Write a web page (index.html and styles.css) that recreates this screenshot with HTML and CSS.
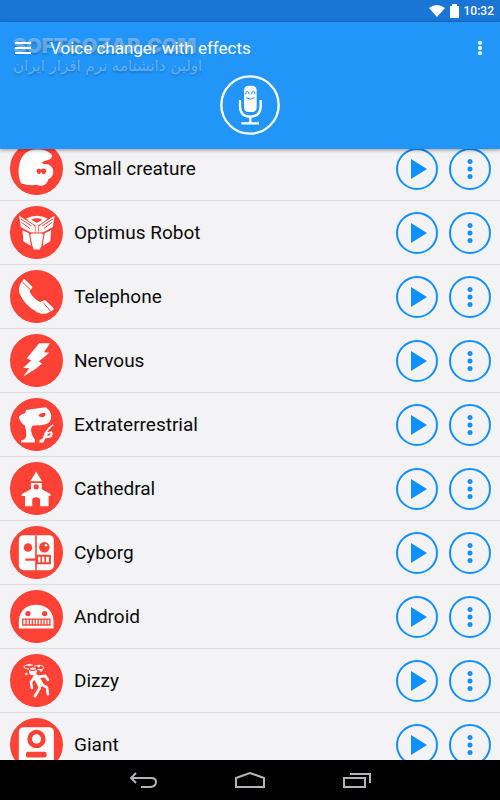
FILE: index.html
```html
<!DOCTYPE html>
<html lang="en">
  <head>
    <meta charset="UTF-8" />
    <meta name="viewport" content="width=device-width, initial-scale=1" />
    <title>Voice changer with effects</title>
    <link rel="stylesheet" href="styles.css">
  </head>
  <body>
    <div class="status-bar">
      <svg width="16" height="14" viewBox="0 0 16 14"><path d="M0 4Q8-2 16 4L8 13z" /></svg>
      <svg width="9" height="14" viewBox="0 0 9 14"><path d="M0 2h2V0h5v2h2v12H0z" /></svg>
      <span>10:32</span>
    </div>

    <header class="header">
      <div class="watermark">
        <strong>SOFTGOZAR.COM</strong>
        <span lang="fa" dir="rtl">اولین دانشنامه نرم افزار ایران</span>
      </div>
      <div class="toolbar">
        <button class="icon-button" aria-label="Menu">
          <svg width="16" height="12" viewBox="0 0 16 12"><path d="M0 0h16v2H0zM0 5h16v2H0zM0 10h16v2H0z" /></svg>
        </button>
        <h1>Voice changer with effects</h1>
        <button class="icon-button" aria-label="More options">
          <svg width="4" height="14" viewBox="0 0 4 14"><circle cx="2" cy="2" r="2" /><circle cx="2" cy="7" r="2" /><circle cx="2" cy="12" r="2" /></svg>
        </button>
      </div>
      <button class="record" aria-label="Record">
        <svg viewBox="60 225 180 180">
          <circle cx="150" cy="315" r="86" fill="none" stroke="#fff" stroke-width="7" />
          <rect x="132" y="257" width="38" height="79" rx="13" fill="#fff" />
          <path d="M137 283q0-9 5-9t5 9M155 283q0-9 5-9t5 9M138 293q13 9 26 0" fill="none" stroke="#2196f8" stroke-width="3" />
          <path d="M120 300v18q0 32 31 32t31-32v-18M151 350v20M124 370h53" fill="none" stroke="#fff" stroke-width="7" />
        </svg>
      </button>
    </header>

    <main class="effects">
      <ul class="effect-list">
        <li class="effect">
          <svg class="effect-icon" viewBox="29 -11 162 162">
            <path d="M64 116C55 106 53 70 58 56C63 32 80 12 108 12C132 10 152 18 158 31Q158 43 136 46Q128 48 126 53Q130 57 138 56Q156 58 161 74Q163 96 146 103Q143 118 130 122Q118 124 112 120Q88 124 64 116z" />
            <path class="cut" d="M110 78Q112 65 124 73Q136 65 140 76Q138 90 129 87L125 80L120 87Q112 88 110 78z" />
          </svg>
          <span class="effect-name">Small creature</span>
        </li>
        <li class="effect">
          <svg class="effect-icon" viewBox="29 181 162 162">
            <path d="M78 219Q111 202 144 219L134 228L113 241H109L88 228z" />
            <path d="M57 211L97 237L105 244V262L91 261L62 245z" />
            <path d="M165 211L125 237L117 244V262L131 261L160 245z" />
            <path d="M107 236H115V262H107z" />
            <path d="M67 255L87 264L93 303L70 289zM155 255L135 264L129 303L152 289z" />
            <path d="M94 265H128L131 270L125 302L120 314H102L97 302L91 270z" />
            <path class="line" d="M62 221L95 242M64 231L90 250M160 221L127 242M158 231L132 250" />
            <path class="cut" d="M94 223Q111 214 128 223L111 233z" />
          </svg>
          <span class="effect-name">Optimus Robot</span>
        </li>
        <li class="effect">
          <svg class="effect-icon" viewBox="29 13 162 162">
            <path d="M74 41L96 63Q99 67 95 70L89 76Q91 94 120 111L132 106Q137 105 141 109L162 129Q164 133 159 136L143 145Q129 150 112 142Q73 121 58 84Q54 68 62 53L70 42Q72 39 74 41z" />
            <path class="line" d="M65 48L91 73M130 112L153 139" />
          </svg>
          <span class="effect-name">Telephone</span>
        </li>
        <li class="effect">
          <svg class="effect-icon" viewBox="29 206 162 162">
            <path d="M118 234H151L133 262L149 263L117 290L127 296L107 313L69 337L88 311L69 310L94 286L80 281z" />
          </svg>
          <span class="effect-name">Nervous</span>
        </li>
        <li class="effect">
          <svg class="effect-icon" viewBox="29 14 162 162">
            <path d="M56 73Q58 66 76 60L78 51L137 42Q142 42 144 48Q152 52 155 68Q156 80 149 88Q138 98 122 97L99 98Q92 104 94 117Q96 130 105 141V150H63V144Q76 141 79 130Q80 112 74 98Q60 90 56 73z" />
            <path d="M119 150V144L130 136L134 122L146 105L160 94L162 97L147 112L143 119L157 116L160 123L157 133L147 136L137 137L131 150z" />
            <path class="cut" d="M116 69Q119 59 136 59Q140 66 133 71Q124 74 116 69zM145 123L153 122V127L143 130z" />
          </svg>
          <span class="effect-name">Extraterrestrial</span>
        </li>
        <li class="effect">
          <svg class="effect-icon" viewBox="29 207 162 162">
            <path d="M109 236L127 266H91z" />
            <path fill-rule="evenodd" d="M93 271H126V290L153 305V311H147V342H121V325Q121 315 109 315T97 325V342H75V311H65V305L93 290zM109 275A8 8 0 1 0 109 291A8 8 0 1 0 109 275z" />
          </svg>
          <span class="effect-name">Cathedral</span>
        </li>
        <li class="effect">
          <svg class="effect-icon" viewBox="29 18 162 162">
            <rect x="56" y="46" width="107" height="107" rx="14" />
            <circle class="cut" cx="84" cy="84" r="13" />
            <circle class="cut" cx="134" cy="83" r="16" />
            <circle cx="139" cy="77" r="4" />
            <path class="cut" d="M106 46H111V153H106zM76 117H108V124H76zM109 106H154V135H109z" />
            <path d="M115 112H122V129H115zM127 112H134V129H127zM139 112H148V129H139z" />
          </svg>
          <span class="effect-name">Cyborg</span>
        </li>
        <li class="effect">
          <svg class="effect-icon" viewBox="29 211 162 162">
            <path d="M56 329V303C60 270 82 256 109 256S158 270 162 303V329z" />
            <circle class="cut" cx="84" cy="283" r="8" />
            <circle class="cut" cx="135" cy="283" r="8" />
            <path class="cut" d="M66 298H153V320H66z" />
            <path d="M70 302h6v14h-6zM80 302h6v14h-6zM90 302h5v14h-5zM99 302h5v14h-5zM108 302h5v14h-5zM117 302h5v14h-5zM126 302h5v14h-5zM135 302h5v14h-5zM144 302h5v14h-5z" />
          </svg>
          <span class="effect-name">Android</span>
        </li>
        <li class="effect">
          <svg class="effect-icon" viewBox="29 20 162 162">
            <circle cx="99" cy="73" r="12" />
            <path class="limb" d="M109 91L122 112" stroke-width="18" />
            <path class="limb" d="M104 90L93 106L96 124M116 90L137 87L145 99M116 112L120 124L105 149M124 112L142 122L145 143" stroke-width="8" />
            <path class="cut" d="M86 65Q100 71 112 65V68Q100 75 86 69z" />
            <path class="limb" d="M86 66Q68 64 73 57Q82 50 98 54M104 57Q126 51 132 60Q135 69 114 68" stroke-width="3" />
            <circle cx="88" cy="54" r="4" /><circle cx="117" cy="57" r="4" /><circle cx="124" cy="70" r="4" /><circle cx="79" cy="81" r="4" />
          </svg>
          <span class="effect-name">Dizzy</span>
        </li>
        <li class="effect">
          <svg class="effect-icon" viewBox="29 212 162 162">
            <rect x="56" y="240" width="107" height="110" rx="14" />
            <circle class="cut" cx="110" cy="276" r="28" />
            <circle cx="110" cy="276" r="14" />
            <rect class="cut" x="78" y="315" width="63" height="18" rx="6" />
          </svg>
          <span class="effect-name">Giant</span>
        </li>
      </ul>
    </main>

    <nav class="nav-bar">
      <button aria-label="Back">
        <svg width="28" height="16" viewBox="0 0 28 16"><path d="M7 1L2 6L7 11M2 6H22Q27 6 27 10T22 15H12" /></svg>
      </button>
      <button aria-label="Home">
        <svg width="30" height="16" viewBox="0 0 30 16"><path d="M1 15V6L15 1L29 6V15z" /></svg>
      </button>
      <button aria-label="Recent apps">
        <svg width="28" height="16" viewBox="0 0 28 16"><path d="M1 6H22V15H1zM7 2H27V11" /></svg>
      </button>
    </nav>

    <template id="actions">
      <button class="round-button play">
        <svg viewBox="0 0 42 42"><path d="M15 11L31 21L15 31z" /></svg>
      </button>
      <button class="round-button more">
        <svg viewBox="0 0 84 84"><circle cx="42" cy="27" r="5" /><circle cx="42" cy="42" r="5" /><circle cx="42" cy="57" r="5" /></svg>
      </button>
    </template>

    <script>
      // Every effect gets the same pair of buttons
      const actions = document.getElementById("actions");

      document.querySelectorAll(".effect").forEach((effect) => {
        const name = effect.querySelector(".effect-name").textContent;
        const buttons = actions.content.cloneNode(true);
        buttons.querySelector(".play").setAttribute("aria-label", "Play " + name);
        buttons.querySelector(".more").setAttribute("aria-label", "Options for " + name);
        effect.appendChild(buttons);
      });
    </script>
  </body>
</html>
```
FILE: styles.css
```css
:root {
  --blue: #2196f8;
  --dark-blue: #1976d6;
  --button-blue: #0f90ff;
  --red: #ff4136;
  --background: #f3f2f4;
  --divider: #dedde0;
}

* {
  box-sizing: border-box;
}

body {
  display: flex;
  flex-direction: column;
  height: 100vh;
  margin: 0;
  font-family: Roboto, sans-serif;
  background-color: var(--background);
  color: #0a0a0a;
}

button {
  display: flex;
  align-items: center;
  justify-content: center;
  margin: 0;
  padding: 0;
  border: none;
  background: none;
  cursor: pointer;
}

/* Status bar */
.status-bar {
  display: flex;
  flex: none;
  align-items: center;
  justify-content: flex-end;
  gap: 5px;
  height: 22px;
  padding-right: 6px;
  background-color: var(--dark-blue);
  color: #fff;
  font-size: 12px;
  font-weight: 500;
}

.status-bar svg,
.icon-button svg {
  fill: #fff;
}

/* Header */
.header {
  position: relative;
  z-index: 1;
  display: flex;
  flex: none;
  flex-direction: column;
  align-items: center;
  padding-bottom: 13px;
  background-color: var(--blue);
  box-shadow: 0 1px 4px rgba(0, 0, 0, 0.4);
}

.toolbar {
  position: relative;
  display: flex;
  align-items: center;
  width: 100%;
  height: 52px;
  padding: 0 10px;
}

.toolbar h1 {
  flex: 1;
  margin: 0 0 0 14px;
  color: #fff;
  font-size: 17px;
  font-weight: 400;
}

.icon-button {
  width: 26px;
  height: 40px;
}

.toolbar .icon-button:last-child {
  width: 20px;
}

.record {
  width: 62px;
  height: 62px;
}

.record svg {
  width: 60px;
  height: 60px;
}

.watermark {
  position: absolute;
  top: 14px;
  left: 13px;
  display: flex;
  flex-direction: column;
  color: rgba(200, 215, 230, 0.45);
  text-shadow: 0 2px 2px rgba(0, 50, 110, 0.25);
  white-space: nowrap;
  pointer-events: none;
}

.watermark strong {
  font-family: Inter, sans-serif;
  font-size: 20px;
  font-weight: 900;
  line-height: 20px;
}

.watermark span {
  font-family: "DejaVu Sans", sans-serif;
  font-size: 15px;
  line-height: 20px;
}

/* Effects */
.effects {
  flex: 1;
  min-height: 0;
  overflow: hidden;
}

/* The first row is partly scrolled under the header */
.effect-list {
  margin: -12px 0 0;
  padding: 0;
  list-style: none;
}

.effect {
  display: flex;
  align-items: center;
  gap: 11px;
  height: 64px;
  padding: 0 9px 0 10px;
  border-bottom: 1px solid var(--divider);
}

.effect-icon {
  flex: none;
  width: 53px;
  height: 53px;
  border-radius: 50%;
  background-color: var(--red);
  fill: #fff;
}

.effect-icon .cut {
  fill: var(--red);
}

.effect-icon .line {
  fill: none;
  stroke: var(--red);
  stroke-width: 3;
}

.effect-icon .limb {
  fill: none;
  stroke: #fff;
  stroke-linecap: round;
  stroke-linejoin: round;
}

.effect-name {
  flex: 1;
  font-size: 19px;
}

.round-button {
  flex: none;
  width: 42px;
  height: 42px;
  border: 2px solid var(--button-blue);
  border-radius: 50%;
}

.round-button svg {
  flex: none;
  width: 42px;
  height: 42px;
  fill: var(--button-blue);
}

/* Navigation bar */
.nav-bar {
  display: flex;
  flex: none;
  justify-content: center;
  gap: 47px;
  height: 40px;
  background-color: #000;
}

.nav-bar button {
  width: 60px;
}

.nav-bar svg {
  fill: none;
  stroke: #b4b4b8;
  stroke-width: 2;
}
```
